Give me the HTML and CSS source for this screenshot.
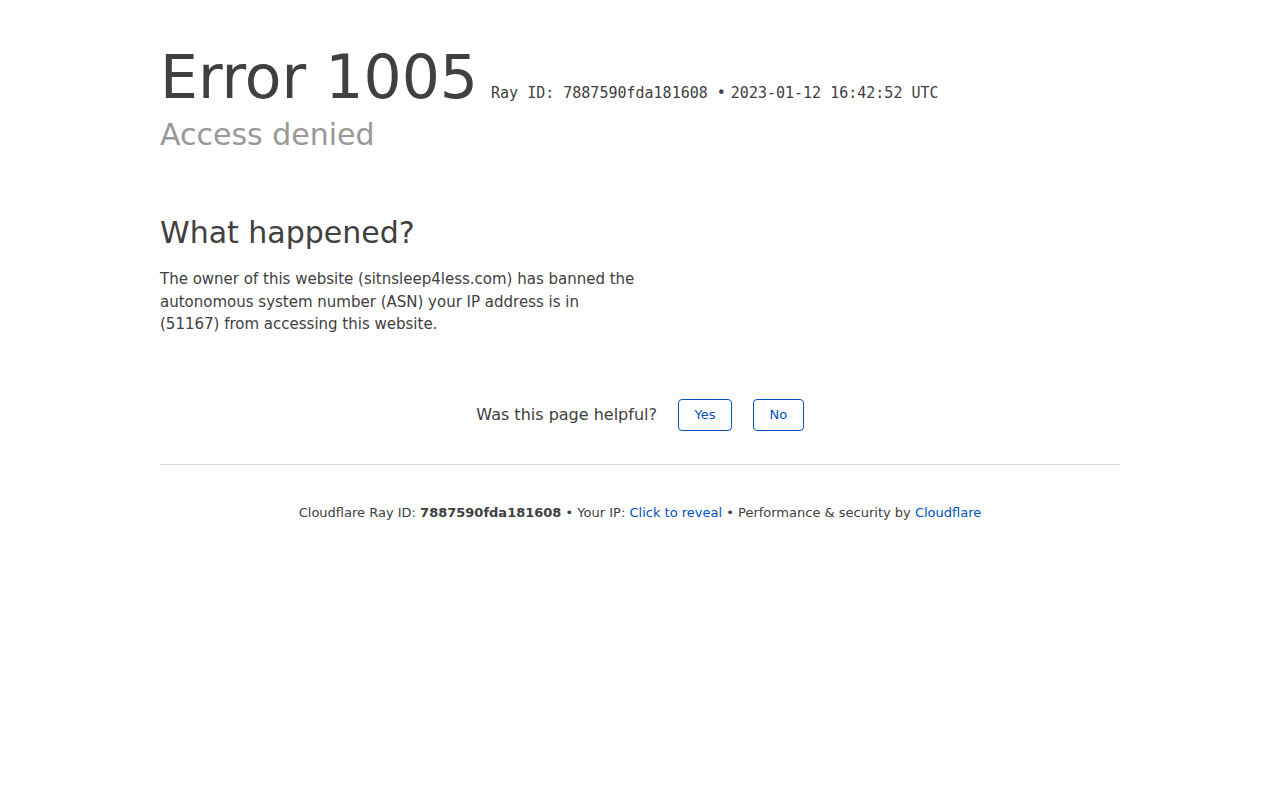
FILE: index.html
```html
<!DOCTYPE html>
<html lang="en">
<head>
  <meta charset="UTF-8">
  <title>Access denied | sitnsleep4less.com used Cloudflare to restrict access</title>
  <link rel="stylesheet" href="styles.css">
</head>
<body>
  <div class="wrapper">
    <div class="header">
      <div class="title-row">
        <h1 class="error-code">Error 1005</h1>
        <span class="ray-id">Ray ID: 7887590fda181608 &bull;</span>
        <span class="ray-id">2023-01-12 16:42:52 UTC</span>
      </div>
      <h2 class="subtitle">Access denied</h2>
    </div>

    <div class="content">
      <h2 class="section-title">What happened?</h2>
      <p class="section-text">The owner of this website (sitnsleep4less.com) has banned the autonomous system number (ASN) your IP address is in (51167) from accessing this website.</p>
    </div>

    <div class="feedback">
      <span class="feedback-question">Was this page helpful?</span>
      <button class="feedback-btn" id="yes">Yes</button>
      <button class="feedback-btn" id="no">No</button>
    </div>

    <p class="footer">
      Cloudflare Ray ID: <strong>7887590fda181608</strong>
      <span class="sep">&bull;</span>
      Your IP: <a href="#" class="link">Click to reveal</a>
      <span class="sep">&bull;</span>
      Performance &amp; security by <a href="#" class="link">Cloudflare</a>
    </p>
  </div>
</body>
</html>
```

FILE: styles.css
```css
body {
  margin: 0;
  font-family: "DejaVu Sans", sans-serif;
  color: #404040;
  background-color: #fff;
}

.wrapper {
  max-width: 960px;
  margin: 0 auto;
  padding-top: 40px;
}

.title-row {
  display: flex;
  align-items: baseline;
}

.error-code {
  margin: 0 13px 0 0;
  font-size: 60px;
  font-weight: 400;
  line-height: 75px;
  color: #404040;
}

.ray-id {
  font-family: "DejaVu Sans Mono", monospace;
  font-size: 15px;
  color: #404040;
  margin-right: 5px;
}

.subtitle {
  margin: 0;
  font-size: 30px;
  font-weight: 400;
  line-height: 40px;
  color: #999;
}

.content {
  padding-top: 58px;
  width: 50%;
}

.section-title {
  margin: 0 0 15px;
  font-size: 30px;
  font-weight: 400;
  line-height: 40px;
  color: #404040;
}

.section-text {
  margin: 0;
  font-size: 15px;
  line-height: 22.5px;
}

.feedback {
  display: flex;
  justify-content: center;
  align-items: center;
  gap: 21px;
  margin-top: 63px;
  padding-bottom: 33px;
  border-bottom: 1px solid #d9d9d9;
}

.feedback-question {
  font-size: 16px;
}

.feedback-btn {
  font-family: "DejaVu Sans", sans-serif;
  font-size: 13px;
  color: #0051c3;
  background-color: #fff;
  border: 1px solid #0051c3;
  border-radius: 4px;
  padding: 7px 15.5px 8px;
  cursor: pointer;
}

.feedback-btn:hover {
  background-color: #003681;
  color: #fff;
}

.footer {
  margin: 0;
  padding-top: 40px;
  text-align: center;
  font-size: 13px;
  color: #404040;
}

.link {
  color: #0051c3;
  text-decoration: none;
}
```
